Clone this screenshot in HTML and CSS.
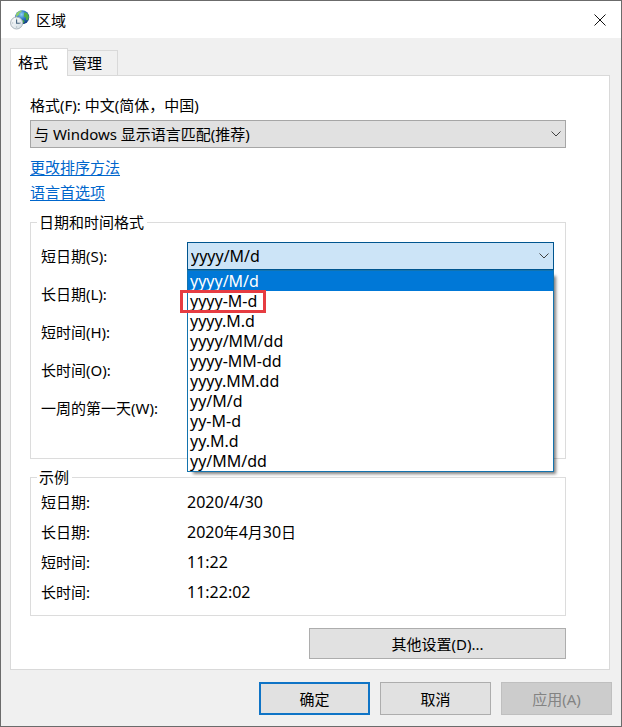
FILE: index.html
```html
<!DOCTYPE html>
<html lang="zh-CN">
<head>
<meta charset="utf-8">
<title>区域</title>
<link rel="stylesheet" href="styles.css">
</head>
<body>
<main class="window">
  <header class="titlebar">
    <svg class="app-icon" viewBox="0 0 20 20" aria-hidden="true">
      <defs>
        <radialGradient id="sea" cx="0.45" cy="0.3" r="0.75">
          <stop offset="0" stop-color="#8fd0f2"/>
          <stop offset="0.45" stop-color="#2c76c4"/>
          <stop offset="1" stop-color="#0b2c78"/>
        </radialGradient>
        <linearGradient id="face" x1="0" y1="0" x2="1" y2="1">
          <stop offset="0" stop-color="#ffffff"/>
          <stop offset="1" stop-color="#cfdbe2"/>
        </linearGradient>
      </defs>
      <circle cx="12.2" cy="7.3" r="7" fill="url(#sea)"/>
      <path d="M6 4.2C7.4 1.8 9.8 0.7 12 0.6l-1 1.6-1.6 0.8-0.4 1.8-2 1.4-0.8 2z" fill="#8fcf6c"/>
      <path d="M14.5 2.2l2.5 0.8 1.6 2.5 0.3 2.3-1.5 2.6-1.2-0.4-0.5-2.4-1.9-1.2 0.2-2.2z" fill="#4fae45"/>
      <path d="M11 9.5l2.5 0.4 1.2 1.5-1.5 2.4-1.5 0.2z" fill="#3d9a4c"/>
      <circle cx="6.6" cy="13" r="6" fill="url(#face)" stroke="#a9b4bb" stroke-width="1"/>
      <path d="M6.6 8.5v1M6.6 16.5v1M2.2 13h1M10 13h1" stroke="#8c99a3" stroke-width="0.8"/>
      <path d="M6.6 9.5v3.7h3.2" fill="none" stroke="#44627c" stroke-width="1.1"/>
    </svg>
    <h1 class="title">区域</h1>
    <button class="close" type="button" aria-label="关闭">
      <svg viewBox="0 0 12 12" aria-hidden="true"><path d="M0.5 0.5l11 11M11.5 0.5l-11 11"/></svg>
    </button>
  </header>

  <div class="tabs" role="tablist">
    <button class="tab active" type="button" role="tab" aria-selected="true">格式</button>
    <button class="tab" type="button" role="tab" aria-selected="false">管理</button>
  </div>

  <section class="panel" role="tabpanel">
    <label class="format-label" for="format">格式(F): 中文(简体，中国)</label>
    <div class="combo">
      <select id="format"><option>与 Windows 显示语言匹配(推荐)</option></select>
      <svg class="chevron" viewBox="0 0 10 6" aria-hidden="true"><path d="M0.5 0.5L5 5l4.5-4.5"/></svg>
    </div>
    <nav class="links">
      <a href="#sort">更改排序方法</a>
      <a href="#language">语言首选项</a>
    </nav>

    <fieldset class="group formats">
      <legend>日期和时间格式</legend>
      <div class="row">
        <label for="short-date">短日期(S):</label>
        <div class="combo open">
          <select id="short-date"><option>yyyy/M/d</option></select>
          <svg class="chevron" viewBox="0 0 10 6" aria-hidden="true"><path d="M0.5 0.5L5 5l4.5-4.5"/></svg>
          <ul class="list" role="listbox" aria-label="短日期">
            <li class="selected" role="option" aria-selected="true">yyyy/M/d</li>
            <li class="marked" role="option">yyyy-M-d</li>
            <li role="option">yyyy.M.d</li>
            <li role="option">yyyy/MM/dd</li>
            <li role="option">yyyy-MM-dd</li>
            <li role="option">yyyy.MM.dd</li>
            <li role="option">yy/M/d</li>
            <li role="option">yy-M-d</li>
            <li role="option">yy.M.d</li>
            <li role="option">yy/MM/dd</li>
          </ul>
        </div>
      </div>
      <div class="row"><span>长日期(L):</span></div>
      <div class="row"><span>短时间(H):</span></div>
      <div class="row"><span>长时间(O):</span></div>
      <div class="row"><span>一周的第一天(W):</span></div>
    </fieldset>

    <fieldset class="group">
      <legend>示例</legend>
      <dl class="samples">
        <dt>短日期:</dt><dd>2020/4/30</dd>
        <dt>长日期:</dt><dd>2020<span class="unit">年</span>4<span class="unit">月</span>30<span class="unit">日</span></dd>
        <dt>短时间:</dt><dd>11:22</dd>
        <dt>长时间:</dt><dd>11:22:02</dd>
      </dl>
    </fieldset>

    <button class="button more" type="button">其他设置(D)...</button>
  </section>

  <footer class="actions">
    <button class="button primary" type="button">确定</button>
    <button class="button" type="button">取消</button>
    <button class="button" type="button" disabled>应用(A)</button>
  </footer>
</main>
</body>
</html>
```
FILE: styles.css
```css
*,
*::after {
  box-sizing: border-box;
}

body {
  margin: 0;
  color: #000;
  font: 15px/20px "Noto Sans", "Noto Sans CJK SC", sans-serif;
}

button,
select {
  margin: 0;
  color: inherit;
  font: inherit;
}

.window {
  display: flex;
  flex-direction: column;
  min-height: 100vh;
  border: 1px solid #6b6b6b;
  background: #f0f0f0;
}

.titlebar {
  display: flex;
  align-items: center;
  height: 37px;
  padding: 0 15px 0 9px;
  background: #fff;
}

.app-icon {
  width: 20px;
  height: 20px;
}

.title {
  flex: 1;
  margin: 0 0 0 6px;
  font-size: 15px;
  font-weight: 400;
}

.close {
  display: flex;
  padding: 0;
  border: 0;
  background: none;
}

.close svg {
  width: 12px;
  height: 12px;
  fill: none;
  stroke: #111;
}

.tabs {
  display: flex;
  align-items: flex-end;
  height: 37px;
  padding: 0 9px;
}

.tab {
  width: 50px;
  height: 25px;
  padding: 0 0 0 4px;
  border: 1px solid #d9d9d9;
  border-width: 1px 1px 0 0;
  background: #f0f0f0;
  text-align: left;
}

.tab.active {
  z-index: 1;
  width: 58px;
  height: 28px;
  margin-bottom: -1px;
  padding: 0 0 2px 7px;
  border-left-width: 1px;
  background: #fff;
}

.panel {
  display: flex;
  flex-direction: column;
  margin: 0 11px 0 9px;
  padding: 19px 43px 10px 19px;
  border: 1px solid #d9d9d9;
  background: #fff;
}

.format-label {
  margin-bottom: 5px;
}

.combo {
  position: relative;
  display: flex;
  height: 28px;
}

.combo select {
  width: 100%;
  padding: 0 24px 0 3px;
  border: 1px solid #a6a6a6;
  border-radius: 0;
  outline: 0;
  background: #e1e1e1;
  appearance: none;
}

.chevron {
  position: absolute;
  top: 11px;
  right: 5px;
  width: 10px;
  height: 6px;
  fill: none;
  stroke: #404040;
  pointer-events: none;
}

.combo.open {
  flex: 1;
  font-size: 16px;
}

.combo.open select {
  border-color: #00558f;
  background: #cce4f7;
}

.list {
  position: absolute;
  z-index: 2;
  top: 28px;
  left: 0;
  right: 0;
  margin: 0;
  padding: 0;
  border: 1px solid #1373ae;
  background: #fff;
  box-shadow: 4px 4px 3px -2px rgba(0, 0, 0, 0.5);
  list-style: none;
}

.list li {
  height: 20px;
  padding-left: 2px;
}

.list .selected {
  background: #0078d7;
  color: #fff;
}

.list .marked {
  position: relative;
}

.marked::after {
  position: absolute;
  top: -1px;
  left: -8px;
  width: 86px;
  height: 23px;
  border: 3px solid #e63c41;
  content: "";
}

.links {
  display: flex;
  flex-direction: column;
  align-items: flex-start;
  gap: 5px;
  margin: 9px 0 10px;
}

.links a {
  color: #0066cc;
  text-underline-offset: 2px;
}

.group {
  min-width: 0;
  margin: 0 0 8px;
  padding: 0 11px 0 10px;
  border: 1px solid #dcdcdc;
}

.group legend {
  margin-left: -4px;
  padding: 0 3px 0 2px;
}

.formats {
  padding-top: 5px;
  padding-bottom: 31px;
}

.row {
  display: flex;
  align-items: center;
  height: 38px;
}

.row label,
.row span {
  width: 146px;
}

.samples {
  display: grid;
  grid-template-columns: 146px 1fr;
  gap: 10px 0;
  margin: 5px 0 13px;
}

.samples dd {
  margin: 0;
  font-size: 16px;
}

.unit {
  font-size: 15px;
}

.button {
  width: 111px;
  height: 33px;
  padding: 0;
  border: 1px solid #adadad;
  background: #e1e1e1;
}

.button.more {
  align-self: flex-end;
  width: 257px;
  height: 31px;
  margin-top: 4px;
}

.button.primary {
  border: 2px solid #0f74c6;
}

.button:disabled {
  border-color: #bfbfbf;
  background: #ccc;
  color: #838383;
}

.actions {
  display: flex;
  justify-content: flex-end;
  gap: 10px;
  padding: 12px 9px 11px;
}
```
